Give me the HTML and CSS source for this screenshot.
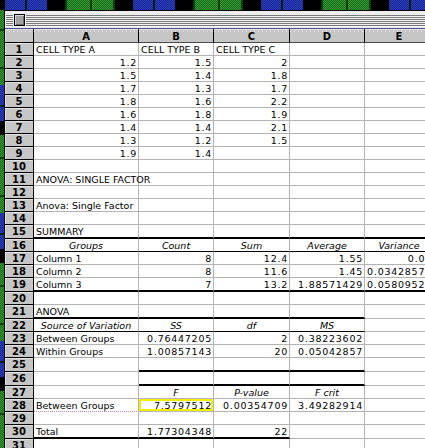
FILE: index.html
```html
<!DOCTYPE html>
<html>
<head>
<meta charset="utf-8">
<link rel="stylesheet" href="styles.css">
</head>
<body>
<div class="screen">
  <div class="desk-top"></div>
  <div class="main">
    <div class="desk-left"></div>
    <div class="window">
      <div class="titlebar">
        <div class="ridge short"></div>
        <div class="close-box"></div>
        <div class="ridge long"></div>
      </div>
      <div class="sheet">
        <div class="row colhead">
          <div class="rh corner"></div>
          <div class="ch ca">A</div><div class="ch cb">B</div><div class="ch cc">C</div><div class="ch cd">D</div><div class="ch ce">E</div>
        </div>
        <div class="row"><div class="rh">1</div><div class="c ca">CELL TYPE A</div><div class="c cb">CELL TYPE B</div><div class="c cc">CELL TYPE C</div><div class="c cd"></div><div class="c ce"></div></div>
        <div class="row"><div class="rh">2</div><div class="c ca n">1.2</div><div class="c cb n">1.5</div><div class="c cc n">2</div><div class="c cd"></div><div class="c ce"></div></div>
        <div class="row"><div class="rh">3</div><div class="c ca n">1.5</div><div class="c cb n">1.4</div><div class="c cc n">1.8</div><div class="c cd"></div><div class="c ce"></div></div>
        <div class="row"><div class="rh">4</div><div class="c ca n">1.7</div><div class="c cb n">1.3</div><div class="c cc n">1.7</div><div class="c cd"></div><div class="c ce"></div></div>
        <div class="row"><div class="rh">5</div><div class="c ca n">1.8</div><div class="c cb n">1.6</div><div class="c cc n">2.2</div><div class="c cd"></div><div class="c ce"></div></div>
        <div class="row"><div class="rh">6</div><div class="c ca n">1.6</div><div class="c cb n">1.8</div><div class="c cc n">1.9</div><div class="c cd"></div><div class="c ce"></div></div>
        <div class="row"><div class="rh">7</div><div class="c ca n">1.4</div><div class="c cb n">1.4</div><div class="c cc n">2.1</div><div class="c cd"></div><div class="c ce"></div></div>
        <div class="row"><div class="rh">8</div><div class="c ca n">1.3</div><div class="c cb n">1.2</div><div class="c cc n">1.5</div><div class="c cd"></div><div class="c ce"></div></div>
        <div class="row"><div class="rh">9</div><div class="c ca n">1.9</div><div class="c cb n">1.4</div><div class="c cc"></div><div class="c cd"></div><div class="c ce"></div></div>
        <div class="row"><div class="rh">10</div><div class="c ca"></div><div class="c cb"></div><div class="c cc"></div><div class="c cd"></div><div class="c ce"></div></div>
        <div class="row"><div class="rh">11</div><div class="c ca">ANOVA: SINGLE FACTOR</div><div class="c cb"></div><div class="c cc"></div><div class="c cd"></div><div class="c ce"></div></div>
        <div class="row"><div class="rh">12</div><div class="c ca"></div><div class="c cb"></div><div class="c cc"></div><div class="c cd"></div><div class="c ce"></div></div>
        <div class="row"><div class="rh">13</div><div class="c ca">Anova: Single Factor</div><div class="c cb"></div><div class="c cc"></div><div class="c cd"></div><div class="c ce"></div></div>
        <div class="row"><div class="rh">14</div><div class="c ca"></div><div class="c cb"></div><div class="c cc"></div><div class="c cd"></div><div class="c ce"></div></div>
        <div class="row thick"><div class="rh">15</div><div class="c ca tb">SUMMARY</div><div class="c cb tb"></div><div class="c cc tb"></div><div class="c cd tb"></div><div class="c ce tb"></div></div>
        <div class="row"><div class="rh">16</div><div class="c ca hd kb">Groups</div><div class="c cb hd kb">Count</div><div class="c cc hd kb">Sum</div><div class="c cd hd kb">Average</div><div class="c ce hd kb">Variance</div></div>
        <div class="row"><div class="rh">17</div><div class="c ca">Column 1</div><div class="c cb n">8</div><div class="c cc n">12.4</div><div class="c cd n">1.55</div><div class="c ce n">0.06</div></div>
        <div class="row"><div class="rh">18</div><div class="c ca">Column 2</div><div class="c cb n">8</div><div class="c cc n">11.6</div><div class="c cd n">1.45</div><div class="c ce n">0.03428571</div></div>
        <div class="row thick"><div class="rh">19</div><div class="c ca tb">Column 3</div><div class="c cb n tb">7</div><div class="c cc n tb">13.2</div><div class="c cd n tb">1.88571429</div><div class="c ce n tb">0.05809524</div></div>
        <div class="row"><div class="rh">20</div><div class="c ca"></div><div class="c cb"></div><div class="c cc"></div><div class="c cd"></div><div class="c ce"></div></div>
        <div class="row thick"><div class="rh">21</div><div class="c ca tb">ANOVA</div><div class="c cb tb"></div><div class="c cc tb"></div><div class="c cd tb"></div><div class="c ce"></div></div>
        <div class="row"><div class="rh">22</div><div class="c ca hd kb">Source of Variation</div><div class="c cb hd kb">SS</div><div class="c cc hd kb">df</div><div class="c cd hd kb">MS</div><div class="c ce"></div></div>
        <div class="row"><div class="rh">23</div><div class="c ca">Between Groups</div><div class="c cb n">0.76447205</div><div class="c cc n">2</div><div class="c cd n">0.38223602</div><div class="c ce"></div></div>
        <div class="row"><div class="rh">24</div><div class="c ca">Within Groups</div><div class="c cb n">1.00857143</div><div class="c cc n">20</div><div class="c cd n">0.05042857</div><div class="c ce"></div></div>
        <div class="row thick"><div class="rh">25</div><div class="c ca"></div><div class="c cb tb"></div><div class="c cc tb"></div><div class="c cd tb"></div><div class="c ce"></div></div>
        <div class="row thick"><div class="rh">26</div><div class="c ca"></div><div class="c cb tb"></div><div class="c cc tb"></div><div class="c cd tb"></div><div class="c ce"></div></div>
        <div class="row"><div class="rh">27</div><div class="c ca"></div><div class="c cb hd">F</div><div class="c cc hd">P-value</div><div class="c cd hd">F crit</div><div class="c ce"></div></div>
        <div class="row"><div class="rh">28</div><div class="c ca ants">Between Groups</div><div class="c cb n sel">7.5797512</div><div class="c cc n">0.00354709</div><div class="c cd n">3.49282914</div><div class="c ce"></div></div>
        <div class="row"><div class="rh">29</div><div class="c ca"></div><div class="c cb"></div><div class="c cc"></div><div class="c cd"></div><div class="c ce"></div></div>
        <div class="row thick"><div class="rh">30</div><div class="c ca tb">Total</div><div class="c cb n tb">1.77304348</div><div class="c cc n tb">22</div><div class="c cd"></div><div class="c ce"></div></div>
        <div class="row"><div class="rh">31</div><div class="c ca"></div><div class="c cb"></div><div class="c cc"></div><div class="c cd"></div><div class="c ce"></div></div>
      </div>
    </div>
  </div>
</div>
</body>
</html>
```
FILE: styles.css
```css
html, body {
  margin: 0;
  padding: 0;
  background: #ffffff;
}

.screen {
  width: 425px;
  height: 448px;
  overflow: hidden;
  position: relative;
  font-family: "DejaVu Sans", "Liberation Sans", sans-serif;
  font-size: 9.5px;
  color: #000;
}

.desk-top {
  height: 10px;
  background-image:
    repeating-conic-gradient(rgba(0,0,0,0.35) 0 25%, rgba(0,0,0,0) 0 50%),
    linear-gradient(90deg,
      #2a3ecc 0 20px, #06250a 20px 22px, #2a3ecc 22px 42px, #000 42px 45px,
      #000 45px 60px, #0b4d10 60px 62px, #2f9e2f 62px 85px, #0b4d10 85px 87px,
      #2f9e2f 87px 108px, #0b4d10 108px 110px, #000 110px 128px);
  background-size: 2px 2px, 128px 100%;
  background-position: 0 0, 5px 0;
  background-repeat: repeat, repeat-x;
}

.main {
  display: flex;
  height: 438px;
}

.desk-left {
  flex: none;
  width: 4px;
  background-image:
    repeating-conic-gradient(rgba(0,0,0,0.35) 0 25%, rgba(0,0,0,0) 0 50%),
    linear-gradient(180deg,
      #2a3ecc 0 20px, #06250a 20px 22px, #2a3ecc 22px 36px, #000 36px 50px,
      #2f9e2f 50px 72px, #0b4d10 72px 74px, #2f9e2f 74px 110px, #0b4d10 110px 112px, #2f9e2f 112px 128px);
  background-size: 2px 2px, 100% 128px;
  background-position: 0 0, 0 75px;
  background-repeat: repeat, repeat-y;
}

.window {
  flex: none;
  width: 440px;
  border-left: 1px solid #000;
  border-top: 1px solid #000;
  background: #fff;
}

.titlebar {
  height: 17px;
  box-sizing: border-box;
  padding: 3px 0 1px 1px;
  display: flex;
  align-items: flex-start;
  background: #eeeeee;
}

.ridge {
  height: 12px;
  margin-top: 1px;
  background: repeating-linear-gradient(180deg, #7a7a7a 0 1px, #f4f4f4 1px 2px);
}

.ridge.short {
  width: 7px;
  flex: none;
}

.ridge.long {
  flex: 1;
}

.close-box {
  flex: none;
  width: 11px;
  height: 12px;
  box-sizing: border-box;
  margin: 0 1px 0 1px;
  border: 1px solid #000;
  background: #a2a2a2;
  box-shadow: inset 1px 1px 0 #d8d8d8, inset -1px -1px 0 #6e6e6e;
}

.sheet {
  border-top: 1px solid #4a4a96;
}

.row {
  display: flex;
  height: 13px;
}

.row.thick {
  height: 14px;
}

.row.colhead {
  height: 14px;
}

.rh {
  flex: none;
  width: 29px;
  height: 100%;
  box-sizing: border-box;
  border-right: 1px solid #000;
  border-bottom: 1px solid #000;
  background: #c6c6c6;
  box-shadow: inset 1px 1px 0 #e2e2e2;
  font-family: "DejaVu Sans", sans-serif;
  font-weight: bold;
  font-size: 10px;
  line-height: 12px;
  padding-top: 1px;
  text-align: center;
}

.rh.corner,
.ch {
  background-color: #c6c6c6;
  background-image: repeating-linear-gradient(90deg, #ececec 0 1px, transparent 1px 4px);
  background-size: 100% 1px;
  background-repeat: no-repeat;
  background-position: 0 2px;
}

.ch {
  flex: none;
  height: 100%;
  box-sizing: border-box;
  border-right: 1px solid #000;
  border-bottom: 1px solid #4a4a4a;
  font-family: "DejaVu Sans", sans-serif;
  font-weight: bold;
  font-size: 10px;
  line-height: 13px;
  padding-top: 1px;
  text-align: center;
  box-shadow: inset 0 1px 0 #e6e6e6;
}

.c {
  flex: none;
  height: 100%;
  box-sizing: border-box;
  border-right: 1px solid #b4b4b4;
  border-bottom: 1px solid #b4b4b4;
  padding: 1px 2px 0 2px;
  line-height: 12px;
  white-space: nowrap;
}

.ca { width: 105px; }
.cb { width: 75px; }
.cc { width: 76px; }
.cd { width: 75px; }
.ce { width: 69px; }

.n {
  text-align: right;
  letter-spacing: 0.75px;
  padding-right: 1px;
}

.hd {
  font-style: italic;
  text-align: center;
}

.tb {
  border-bottom: 2px solid #000;
}

.kb {
  border-bottom-color: #000;
}

.sel {
  box-shadow: inset 0 0 0 2px #f6ee00;
}

.ants {
  border-bottom: 1px dotted #d08aa8;
}
```
